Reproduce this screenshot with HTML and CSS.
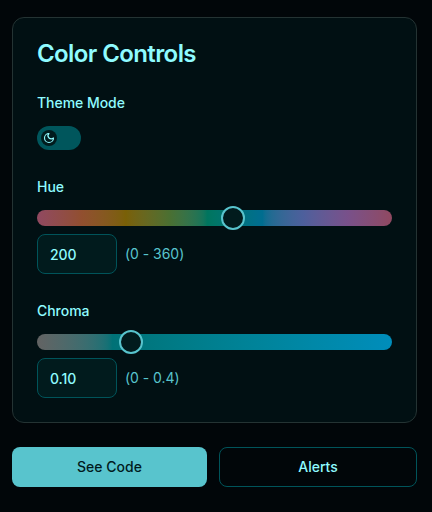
FILE: index.html
```html
<!DOCTYPE html>
<html lang="en">
<head>
<meta charset="utf-8">
<title>Color Controls</title>
<link rel="stylesheet" href="styles.css">
</head>
<body>
<main class="page">
  <section class="card">
    <h2 class="title">Color Controls</h2>
    <div class="field">
      <div class="label">Theme Mode</div>
      <button class="switch" role="switch" aria-checked="false">
        <span class="switch-thumb">
          <svg viewBox="0 0 24 24" width="12" height="12" fill="none" stroke="currentColor" stroke-width="2.3" stroke-linecap="round" stroke-linejoin="round"><path d="M12 3a6 6 0 0 0 9 9 9 9 0 1 1-9-9Z"/></svg>
        </span>
      </button>
    </div>
    <div class="field">
      <div class="label">Hue</div>
      <div class="track track-hue"><span class="thumb" style="left: 196px"></span></div>
      <div class="row"><div class="input">200</div><span class="range">(0 - 360)</span></div>
    </div>
    <div class="field">
      <div class="label">Chroma</div>
      <div class="track track-chroma"><span class="thumb" style="left: 94px"></span></div>
      <div class="row"><div class="input">0.10</div><span class="range">(0 - 0.4)</span></div>
    </div>
  </section>
  <div class="actions">
    <button class="button primary">See Code</button>
    <button class="button outline">Alerts</button>
  </div>
</main>
</body>
</html>
```
FILE: styles.css
```css
* { box-sizing: border-box; }
body {
  margin: 0;
  background: #010609;
  color: #8ffbff;
  font-family: Inter, "Liberation Sans", sans-serif;
  font-size: 14px;
  line-height: 20px;
}
.page { width: 405px; margin: 17px 0 0 12px; }
.card {
  height: 406px;
  padding: 24px;
  border: 1px solid #243333;
  border-radius: 12px;
  background: #011013;
}
.title {
  margin: 0 0 27px;
  font-size: 24px;
  font-weight: 600;
  line-height: 24px;
  letter-spacing: -0.6px;
}
.field { margin-bottom: 27px; }
.label { font-weight: 550; letter-spacing: -0.04px; margin-bottom: 13px; }
.switch {
  display: flex;
  align-items: center;
  width: 44px;
  height: 24px;
  padding: 4px;
  border: 0;
  border-radius: 12px;
  background: #00565c;
}
.switch-thumb {
  display: flex;
  align-items: center;
  justify-content: center;
  width: 16px;
  height: 16px;
  border-radius: 50%;
  background: #011b1d;
  color: #8ffbff;
}
.track {
  position: relative;
  height: 16px;
  border-radius: 8px;
}
.track-hue {
  background: linear-gradient(to right, oklch(0.5 0.1 0), oklch(0.5 0.1 45), oklch(0.5 0.1 90), oklch(0.5 0.1 135), oklch(0.5 0.1 180), oklch(0.5 0.1 225), oklch(0.5 0.1 270), oklch(0.5 0.1 315), oklch(0.5 0.1 360));
}
.track-chroma {
  background: linear-gradient(to right, oklch(0.5 0 200), oklch(0.5 0.4 200));
}
.thumb {
  position: absolute;
  top: -4px;
  width: 24px;
  height: 24px;
  margin-left: -12px;
  border: 2px solid #58c4cd;
  border-radius: 50%;
  background: #011b1d;
}
.row {
  display: flex;
  align-items: center;
  gap: 8px;
  margin-top: 8px;
}
.input {
  width: 80px;
  height: 40px;
  padding: 10px 12px 8px;
  border: 1px solid #00545a;
  border-radius: 8px;
  background: #011b1d;
  font-weight: 450;
  letter-spacing: -0.1px;
}
.range { color: #58c4cd; letter-spacing: -0.03px; }
.actions {
  display: grid;
  grid-template-columns: 195px 198px;
  gap: 12px;
  margin-top: 24px;
}
.button {
  height: 40px;
  padding: 0;
  border: 0;
  border-radius: 8px;
  font: 500 14px/20px Inter, "Liberation Sans", sans-serif;
}
.primary { background: #58c4cd; color: #011b1d; font-weight: 450; letter-spacing: 0.04px; }
.outline { background: transparent; border: 1px solid #00545a; color: #8ffbff; font-weight: 550; }
```
